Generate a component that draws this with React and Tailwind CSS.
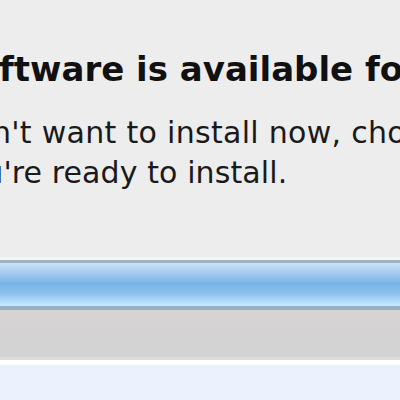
export default function App() {
  return (
    <div className="w-[400px] h-[400px] overflow-hidden flex flex-col bg-[#ededed]" style={{ fontFamily: '"DejaVu Sans", "Lucida Grande", sans-serif' }}>
      <div className="pt-[48px] h-[257px] text-[#111]">
        <p className="whitespace-nowrap font-bold text-[34px] leading-[42px] -ml-[1px]">ftware is available for your computer.</p>
        <div className="mt-[23px] text-[30px] leading-[40px] text-[#1a1a1a]">
          <p className="whitespace-nowrap -ml-[8px] tracking-[0.3px]">n't want to install now, choose Software Update</p>
          <p className="whitespace-nowrap -ml-[52px] tracking-[0.1px]">you're ready to install.</p>
        </div>
      </div>
      <div className="h-[3px] bg-[#f7f6f4]" />
      <div className="h-[3px] bg-[#9fb3c2]" />
      <div className="h-[43px] bg-[linear-gradient(180deg,#cae2f8_0%,#a9cdf0_20%,#78b4e6_48%,#8cc2ee_72%,#b8e1fc_92%,#c4e8fd_100%)]" />
      <div className="h-[4px] bg-[#9aaebd]" />
      <div className="h-[47px] bg-[linear-gradient(180deg,#d9d3d3_0%,#d5d3d3_30%,#d3d3d3_100%)]" />
      <div className="h-[3px] bg-[#dcdcdc]" />
      <div className="h-[5px] bg-white" />
      <div className="flex-1 bg-[#ecf2fd]" />
    </div>
  );
}
